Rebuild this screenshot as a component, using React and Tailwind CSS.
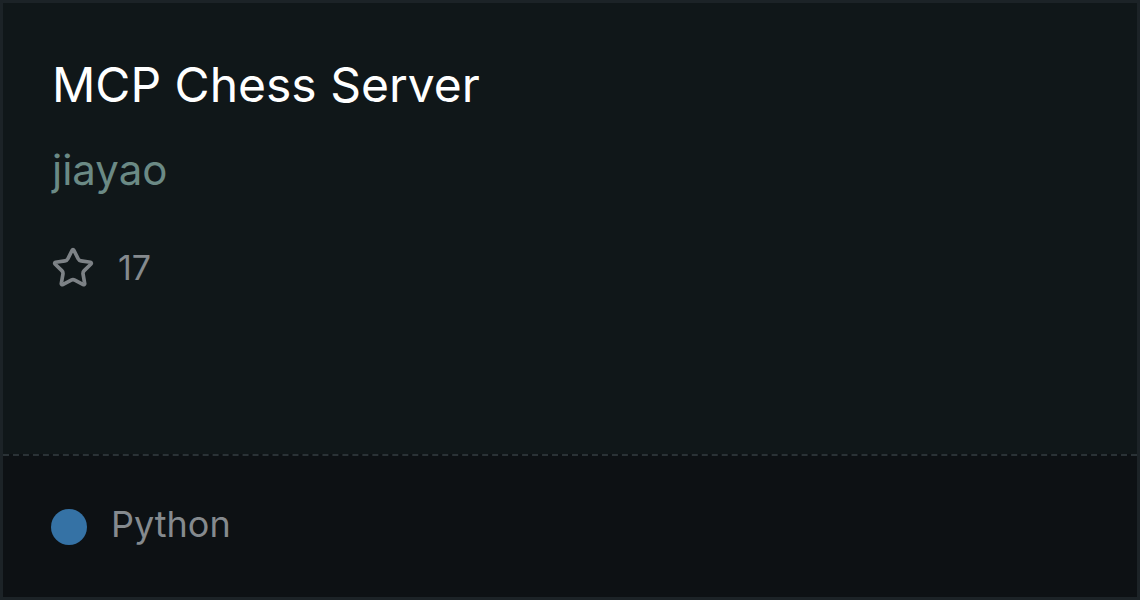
import React from "react";
import { Star } from "lucide-react";

const App = () => {
  return (
    <div
      className="w-[1140px] h-[600px] flex flex-col border-[3px] border-[#1c2327] bg-[#101719]"
      style={{ fontFamily: "Inter, 'Noto Sans', sans-serif" }}
    >
      <div className="flex-1 flex flex-col px-[49px] pt-[50px]">
        <h1 className="text-[48px] leading-[64px] text-white font-normal">
          MCP Chess Server
        </h1>
        <div className="mt-[27px] text-[42px] leading-[52px] text-[#6b8a85]">
          jiayao
        </div>
        <div className="mt-[50px] flex items-center gap-[23px]">
          <Star size={44} strokeWidth={2} className="-ml-[1px] text-[#7d8286]" />
          <span className="text-[34px] leading-[40px] text-[#858a8e]">17</span>
        </div>
      </div>
      <div className="h-[143px] border-t-2 border-dashed border-[#2a3236] bg-[#0d1114] flex items-center px-[48px]">
        <span className="w-[36px] h-[36px] rounded-full bg-[#3572a5]" />
        <span className="ml-[24px] mb-[5px] text-[36px] leading-[40px] text-[#858a8e]">
          Python
        </span>
      </div>
    </div>
  );
};

export default App;
